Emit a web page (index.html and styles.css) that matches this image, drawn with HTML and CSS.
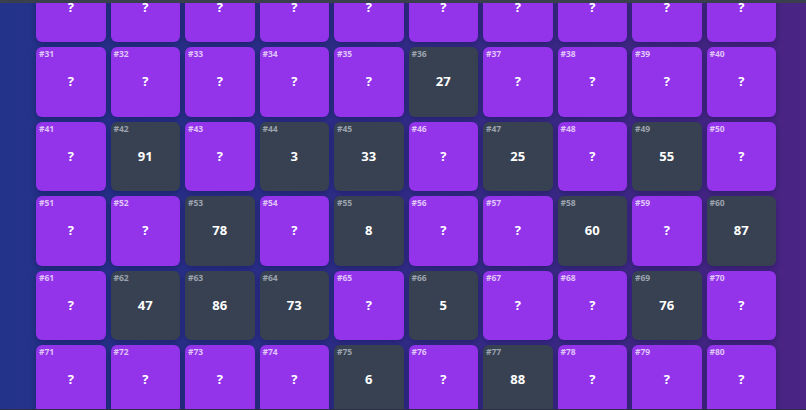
FILE: index.html
```html
<!DOCTYPE html>
<html>
<head>
<meta charset="utf-8">
<link rel="stylesheet" href="styles.css">
</head>
<body>
<div class="topbar"></div>
<main class="board">
  <div class="grid" id="grid"></div>
</main>
<div class="bottombar"></div>
<script>
  var revealed = {36:27,42:91,44:3,45:33,47:25,49:55,53:78,55:8,58:60,60:87,62:47,63:86,64:73,66:5,69:76,75:6,77:88};
  var grid = document.getElementById('grid');
  var html = '';
  for (var i = 21; i <= 90; i++) {
    var v = revealed[i];
    var cls = v !== undefined ? 'tile tile-open' : 'tile tile-closed';
    html += '<div class="' + cls + '"><span class="tile-id">#' + i + '</span><span class="tile-value">' + (v !== undefined ? v : '?') + '</span></div>';
  }
  grid.innerHTML = html;
</script>
</body>
</html>
```
FILE: styles.css
```css
html, body {
  margin: 0;
  padding: 0;
  height: 100%;
  overflow: hidden;
}
body {
  display: flex;
  flex-direction: column;
  background: linear-gradient(to right, #24338a 0%, #2e2f8a 40%, #3f2a88 75%, #4b2484 100%);
  font-family: "Open Sans", "Noto Sans", "DejaVu Sans", sans-serif;
}
.topbar {
  height: 3px;
  flex: 0 0 3px;
  background: #3a3f4e;
  position: relative;
  z-index: 2;
}
.board {
  flex: 1;
  overflow: hidden;
  padding: 0 30px 0 36px;
}
.grid {
  width: 740px;
  margin-top: -30.5px;
  display: grid;
  grid-template-columns: repeat(10, 1fr);
  gap: 5px;
}
.tile {
  aspect-ratio: 1 / 1;
  border-radius: 6px;
  display: flex;
  align-items: center;
  justify-content: center;
  position: relative;
  box-shadow: 0 2px 6px rgba(10, 10, 60, 0.35);
}
.tile-closed {
  background: #9333ea;
}
.tile-open {
  background: #374151;
}
.tile-id {
  position: absolute;
  top: 3px;
  left: 3px;
  font-size: 8.5px;
  font-weight: 700;
  line-height: 1;
  color: rgba(255, 255, 255, 0.72);
}
.tile-open .tile-id {
  color: #9ca3af;
}
.tile-value {
  font-size: 13px;
  font-weight: 700;
  color: #ffffff;
  line-height: 1;
}
.bottombar {
  height: 1px;
  flex: 0 0 1px;
  background: #2a2d45;
}
```
